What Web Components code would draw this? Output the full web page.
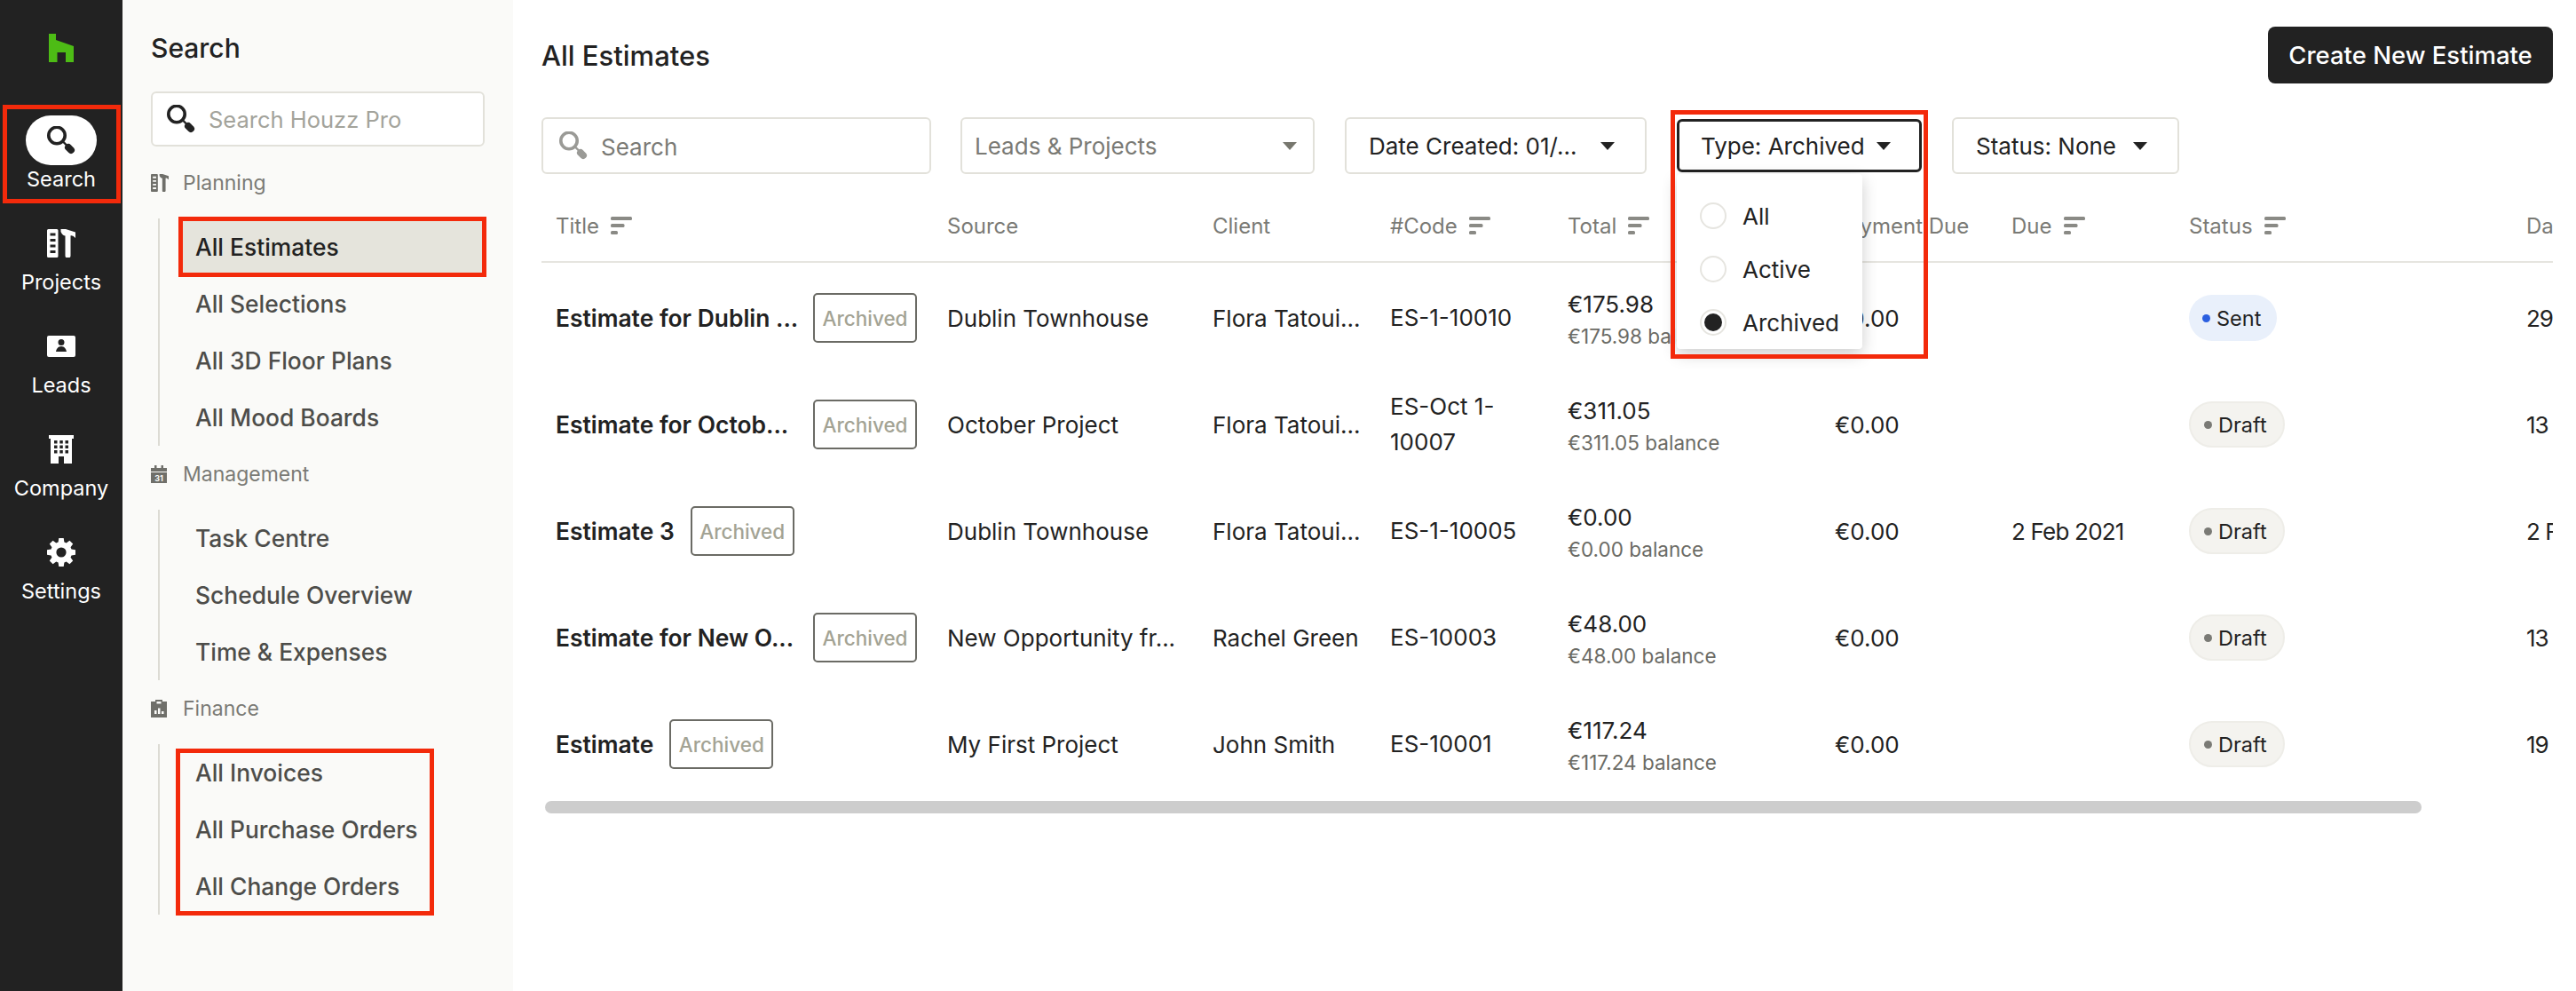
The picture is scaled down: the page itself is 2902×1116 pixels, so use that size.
<!DOCTYPE html>
<html lang="en">
<head>
<meta charset="utf-8">
<title>All Estimates</title>
<style>
  html, body { margin: 0; height: 100%; background: #fff; }
  body {
    font-family: "Inter", "Liberation Sans", sans-serif;
    color: #222;
    overflow: hidden;
  }
  #app { display: flex; height: 1116px; }
</style>
</head>
<body>
<div id="app">
  <hz-rail>
    <hz-rail-item icon="search" active highlight>Search</hz-rail-item>
    <hz-rail-item icon="projects">Projects</hz-rail-item>
    <hz-rail-item icon="leads">Leads</hz-rail-item>
    <hz-rail-item icon="company">Company</hz-rail-item>
    <hz-rail-item icon="settings">Settings</hz-rail-item>
  </hz-rail>

  <hz-side-panel heading="Search" placeholder="Search Houzz Pro">
    <hz-nav-section icon="projects" label="Planning">
      <hz-nav-item active>All Estimates</hz-nav-item>
      <hz-nav-item>All Selections</hz-nav-item>
      <hz-nav-item>All 3D Floor Plans</hz-nav-item>
      <hz-nav-item>All Mood Boards</hz-nav-item>
    </hz-nav-section>
    <hz-nav-section icon="calendar" label="Management">
      <hz-nav-item>Task Centre</hz-nav-item>
      <hz-nav-item>Schedule Overview</hz-nav-item>
      <hz-nav-item>Time &amp; Expenses</hz-nav-item>
    </hz-nav-section>
    <hz-nav-section icon="finance" label="Finance" highlight>
      <hz-nav-item>All Invoices</hz-nav-item>
      <hz-nav-item>All Purchase Orders</hz-nav-item>
      <hz-nav-item>All Change Orders</hz-nav-item>
    </hz-nav-section>
  </hz-side-panel>

  <hz-main heading="All Estimates" action="Create New Estimate">
    <hz-search-filter slot="filters" style="width:439px;margin-right:-1px">Search</hz-search-filter>
    <hz-filter slot="filters" kind="select" style="width:399px">Leads &amp; Projects</hz-filter>
    <hz-filter slot="filters" style="width:340px">Date Created: 01/...</hz-filter>
    <hz-filter slot="filters" open style="width:276px">Type: Archived
      <hz-radio-menu slot="menu">
        <hz-radio-option>All</hz-radio-option>
        <hz-radio-option>Active</hz-radio-option>
        <hz-radio-option checked>Archived</hz-radio-option>
      </hz-radio-menu>
    </hz-filter>
    <hz-filter slot="filters" style="width:256px">Status: None</hz-filter>

    <hz-table>
      <hz-header-row>
        <hz-header-cell sortable>Title</hz-header-cell>
        <hz-header-cell>Source</hz-header-cell>
        <hz-header-cell>Client</hz-header-cell>
        <hz-header-cell sortable>#Code</hz-header-cell>
        <hz-header-cell sortable>Total</hz-header-cell>
        <hz-header-cell>Payment Due</hz-header-cell>
        <hz-header-cell sortable>Due</hz-header-cell>
        <hz-header-cell sortable>Status</hz-header-cell>
        <hz-header-cell>Da</hz-header-cell>
      </hz-header-row>

      <hz-estimate-row truncated name="Estimate for Dublin ..." source="Dublin Townhouse" client="Flora Tatoui..." code="ES-1-10010" total="€175.98" pay="€0.00" status="Sent" date="29"></hz-estimate-row>
      <hz-estimate-row truncated name="Estimate for Octob..." source="October Project" client="Flora Tatoui..." code="ES-Oct 1-10007" total="€311.05" pay="€0.00" status="Draft" date="13"></hz-estimate-row>
      <hz-estimate-row name="Estimate 3" source="Dublin Townhouse" client="Flora Tatoui..." code="ES-1-10005" total="€0.00" pay="€0.00" due="2 Feb 2021" status="Draft" date="2 F"></hz-estimate-row>
      <hz-estimate-row truncated name="Estimate for New O..." source="New Opportunity fr..." client="Rachel Green" code="ES-10003" total="€48.00" pay="€0.00" status="Draft" date="13"></hz-estimate-row>
      <hz-estimate-row name="Estimate" source="My First Project" client="John Smith" code="ES-10001" total="€117.24" pay="€0.00" status="Draft" date="19"></hz-estimate-row>
    </hz-table>
  </hz-main>
</div>

<script>
// Annotation red used by every highlight box in the screenshot
const RED = '#f32a0b';

function gearPath() {
  // 8 teeth gear on a 32 box, centre hole cut by evenodd
  let d = '';
  for (let i = 0; i < 8; i++) {
    const a = (i * Math.PI) / 4;
    const pts = [[-3.4, -11.5], [-2.7, -16], [2.7, -16], [3.4, -11.5]];
    pts.forEach(([x, y], j) => {
      const px = 16 + x * Math.cos(a) - y * Math.sin(a);
      const py = 16 + x * Math.sin(a) + y * Math.cos(a);
      d += (i === 0 && j === 0 ? 'M' : 'L') + px.toFixed(2) + ' ' + py.toFixed(2);
    });
  }
  return d + 'Z M16 10.4a5.6 5.6 0 1 0 0 11.2a5.6 5.6 0 1 0 0-11.2Z';
}

const ICONS = {
  logo: `<path d="M0 0H8V7L28 14V32H19V21H9.5V32H0Z"/>`,
  search: `<circle cx="11" cy="10.5" r="9.2" fill="none" stroke="currentColor" stroke-width="3.6"/>
           <path d="M17.500 17L22 21.500" stroke="currentColor" stroke-width="2.4"/>
           <path d="M24 24L27 27" stroke="currentColor" stroke-width="8" stroke-linecap="round"/>`,
  projects: `<path fill-rule="evenodd" d="M1.5 0H11a1.5 1.5 0 0 1 1.5 1.5V30.500a1.5 1.500 0 0 1-1.500 1.500H1.500A1.500 1.500 0 0 1 0 30.500V1.500A1.500 1.500 0 0 1 1.500 0ZM3.500 4.500V7.500H9.500V4.500ZM3.500 11V14H9.500V11ZM3.500 17.500V20.500H9.500V17.500ZM3.500 24V27H9.500V24Z"/>
             <path d="M15.500 0H21L32 3.500V10C29.500 7.500 27.500 7 26.500 7.500V30a3 2.500 0 0 1-6 0V7.500C18.500 7.500 16.500 5.500 15.500 3Z"/>`,
  leads: `<path fill-rule="evenodd" d="M2 0H30a2 2 0 0 1 2 2V22a2 2 0 0 1-2 2H2a2 2 0 0 1-2-2V2A2 2 0 0 1 2 0ZM16 4a3.500 3.500 0 1 0 0 7a3.500 3.500 0 1 0 0-7ZM16 12C12.500 12 10.500 15 10 18H22C21.500 15 19.500 12 16 12Z"/>`,
  company: `<path fill-rule="evenodd" d="M0 0H28V4H26V32H17V24H11V32H2V4H0ZM6 6V9.500H9.500V6ZM12.300 6V9.500H15.800V6ZM18.500 6V9.500H22V6ZM6 11.500V15H9.500V11.500ZM12.300 11.500V15H15.800V11.500ZM18.500 11.500V15H22V11.500ZM6 17V20.500H9.500V17ZM12.300 17V20.500H15.800V17ZM18.500 17V20.500H22V17Z"/>`,
  settings: `<path fill-rule="evenodd" d="${gearPath()}"/>`,
  calendar: `<path d="M4 0H6.500V3H11.500V0H14V3H18V7H0V3H4Z"/><rect y="8" width="18" height="12"/>
             <text x="9" y="17.500" font-size="9" font-weight="700" text-anchor="middle" fill="#fafaf8" font-family="Inter, sans-serif">31</text>`,
  finance: `<path fill-rule="evenodd" d="M5 0H13V2H18V20H0V2H5ZM6.500 2V4.500H11.500V2ZM4 12V16H6.500V12ZM8 9.500V16H10.500V9.500ZM12 13V16H14.500V13Z"/>`,
  sort: `<rect width="24" height="4" rx="1.500"/><rect y="8" width="15.500" height="4" rx="1.500"/><rect y="16" width="8" height="4" rx="1.500"/>`,
  caret: `<path d="M0 0H16L8 9Z"/>`
};

const ICON_BOX = {
  logo: '0 0 28 32', search: '0 0 32 32', projects: '0 0 32 32', leads: '0 0 32 24',
  company: '0 0 28 32', settings: '0 0 32 32', calendar: '0 0 18 20', finance: '0 0 18 20',
  sort: '0 0 24 20', caret: '0 0 16 9'
};

class HzIcon extends HTMLElement {
  connectedCallback() {
    const name = this.getAttribute('name');
    const w = this.getAttribute('w');
    const h = this.getAttribute('h');
    this.attachShadow({ mode: 'open' }).innerHTML = `
      <style>
        :host { display: inline-flex; flex: none; width: ${w}px; height: ${h}px; color: inherit; }
        svg { display: block; width: 100%; height: 100%; fill: currentColor; }
      </style>
      <svg viewBox="${ICON_BOX[name]}" preserveAspectRatio="none">${ICONS[name]}</svg>`;
  }
}

const RAIL_SIZES = {
  search: [32, 32], projects: [32, 32], leads: [32, 24], company: [28, 32], settings: [32, 32]
};

class HzRail extends HTMLElement {
  constructor() {
    super();
    this.attachShadow({ mode: 'open' }).innerHTML = `
      <style>
        :host {
          display: flex; flex-direction: column; align-items: stretch; flex: none;
          width: 138px; background: #222; box-sizing: border-box; padding-top: 38px;
        }
        .logo { display: flex; justify-content: center; color: #4dbc15; margin-bottom: 60px; }
        .items { display: flex; flex-direction: column; gap: 28px; }
      </style>
      <div class="logo"><hz-icon name="logo" w="28" h="32"></hz-icon></div>
      <div class="items"><slot></slot></div>`;
  }
}

class HzRailItem extends HTMLElement {
  connectedCallback() {
    const icon = this.getAttribute('icon');
    const [w, h] = RAIL_SIZES[icon];
    this.attachShadow({ mode: 'open' }).innerHTML = `
      <style>
        :host { display: flex; flex-direction: column; align-items: center; position: relative; color: #fff; }
        .pill {
          width: 80px; height: 56px; border-radius: 28px;
          display: flex; align-items: center; justify-content: center;
        }
        :host([active]) .pill { background: #fff; color: #222; }
        .label { font-size: 23.500px; line-height: 32px; }
        :host([highlight])::after {
          content: ""; position: absolute; left: 3px; top: -12px; width: 133px; height: 111px;
          box-sizing: border-box; border: 5px solid ${RED};
        }
      </style>
      <div class="pill"><hz-icon name="${icon}" w="${w}" h="${h}"></hz-icon></div>
      <div class="label"><slot></slot></div>`;
  }
}

class HzSidePanel extends HTMLElement {
  connectedCallback() {
    this.attachShadow({ mode: 'open' }).innerHTML = `
      <style>
        :host {
          display: block; flex: none; width: 440px; box-sizing: border-box;
          background: #fafaf8; padding: 34px 32px 0;
        }
        h2 { margin: 0; font-size: 30px; line-height: 40px; font-weight: 500; color: #222; }
        .search {
          margin: 29px 0 25px; width: 376px; height: 62px; box-sizing: border-box;
          border: 2px solid #e2e1da; border-radius: 6px; background: #fff;
          display: flex; align-items: center; gap: 15px; padding-left: 16px;
          font-size: 25.500px; color: #a3a39b;
        }
        .search hz-icon { color: #222; }
      </style>
      <h2>${this.getAttribute('heading')}</h2>
      <div class="search"><hz-icon name="search" w="32" h="32"></hz-icon>${this.getAttribute('placeholder')}</div>
      <slot></slot>`;
  }
}

class HzNavSection extends HTMLElement {
  connectedCallback() {
    const icon = this.getAttribute('icon');
    const size = icon === 'projects' ? [20, 20] : [18, 20];
    this.attachShadow({ mode: 'open' }).innerHTML = `
      <style>
        :host { display: block; margin-bottom: 16px; }
        .head {
          display: flex; align-items: center; height: 32px; margin-bottom: 24px;
          font-size: 23px; color: #7a7a75;
        }
        .icon { width: 36px; display: flex; color: #6f6f6a; }
        .list {
          position: relative; margin-left: 8px; border-left: 2px solid #dcdbd4;
          display: flex; flex-direction: column;
        }
        :host([highlight]) .list::after {
          content: ""; position: absolute; left: 18px; top: 5px; width: 291px; height: 188px;
          box-sizing: border-box; border: 5px solid ${RED}; pointer-events: none;
        }
      </style>
      <div class="head"><span class="icon"><hz-icon name="${icon}" w="${size[0]}" h="${size[1]}"></hz-icon></span>${this.getAttribute('label')}</div>
      <div class="list"><slot></slot></div>`;
  }
}

class HzNavItem extends HTMLElement {
  constructor() {
    super();
    this.attachShadow({ mode: 'open' }).innerHTML = `
      <style>
        :host {
          display: flex; align-items: center; box-sizing: border-box;
          height: 58px; margin: 3px 0 3px 26px; width: 337px; padding-left: 14px;
          font-size: 26.400px; font-weight: 500; color: #4d4d4a;
        }
        :host([active]) { background: #e5e4dc; color: #222; outline: 5px solid ${RED}; }
      </style>
      <slot></slot>`;
  }
}

class HzMain extends HTMLElement {
  connectedCallback() {
    this.attachShadow({ mode: 'open' }).innerHTML = `
      <style>
        :host {
          display: flex; flex-direction: column; flex: 1; min-width: 0;
          box-sizing: border-box; padding: 30px 26px 0 32px; background: #fff;
        }
        header { display: flex; justify-content: space-between; align-items: center; height: 64px; }
        h1 { margin: 0; font-size: 31px; font-weight: 500; color: #222; }
        button {
          width: 321px; height: 64px; border: 0; border-radius: 8px; background: #222; color: #fff;
          font: 500 27.500px "Inter", "Liberation Sans", sans-serif;
        }
        .filters { display: flex; gap: 34px; margin-top: 38px; position: relative; z-index: 2; }
        .body { margin-top: 18px; }
        .scrollbar { margin: 4px 0 0 4px; width: 2114px; height: 14px; border-radius: 7px; background: #cdcdcd; }
      </style>
      <header><h1>${this.getAttribute('heading')}</h1><button>${this.getAttribute('action')}</button></header>
      <div class="filters"><slot name="filters"></slot></div>
      <div class="body"><slot></slot><div class="scrollbar"></div></div>`;
  }
}

class HzSearchFilter extends HTMLElement {
  constructor() {
    super();
    this.attachShadow({ mode: 'open' }).innerHTML = `
      <style>
        :host {
          display: flex; align-items: center; gap: 15px; height: 64px; box-sizing: border-box;
          border: 2px solid #e2e1da; border-radius: 6px; padding-left: 18px;
          font-size: 26px; color: #7a7a75;
        }
        span { padding-top: 3px; }
        hz-icon { color: #9a9a96; }
      </style>
      <hz-icon name="search" w="32" h="32"></hz-icon><span><slot></slot></span>`;
  }
}

class HzFilter extends HTMLElement {
  connectedCallback() {
    const select = this.getAttribute('kind') === 'select';
    this.attachShadow({ mode: 'open' }).innerHTML = `
      <style>
        :host {
          display: flex; position: relative; align-items: center; justify-content: space-between;
          height: 64px; box-sizing: border-box;
          border: 2px solid #e2e1da; border-radius: 6px; background: #fff;
          padding: 0 34px 0 25px; font-size: 26px; color: #222;
        }
        :host([kind="select"]) { color: #7a7a75; padding: 0 18px 0 14px; }
        :host([open]) {
          height: 60px; margin-top: 2px; border: 3px solid #222; padding: 0 32px 0 24px;
        }
        :host([open])::after {
          content: ""; position: absolute; left: -10px; right: -10px; top: -13px; height: 280px;
          box-sizing: border-box; border: 5px solid ${RED}; pointer-events: none; z-index: 3;
        }
        hz-icon { color: ${select ? '#77776e' : '#222'}; }
      </style>
      <span><slot></slot></span>
      <hz-icon name="caret" w="16" h="9"></hz-icon>
      <slot name="menu"></slot>`;
  }
}

class HzRadioMenu extends HTMLElement {
  constructor() {
    super();
    this.attachShadow({ mode: 'open' }).innerHTML = `
      <style>
        :host {
          position: absolute; left: -3px; top: 59px; width: 209px; height: 197px;
          box-sizing: border-box; padding-top: 17px; background: #fff; border-radius: 4px;
          box-shadow: 0 6px 18px rgba(0, 0, 0, .2); z-index: 2;
          display: flex; flex-direction: column;
        }
      </style>
      <slot></slot>`;
  }
}

class HzRadioOption extends HTMLElement {
  constructor() {
    super();
    this.attachShadow({ mode: 'open' }).innerHTML = `
      <style>
        :host {
          display: flex; align-items: center; gap: 18px; height: 60px; padding-left: 26px;
          font-size: 26px; color: #222;
        }
        .dot { width: 30px; height: 30px; box-sizing: border-box; border: 2px solid #e6e5e0; border-radius: 50%; position: relative; }
        :host([checked]) .dot::after {
          content: ""; position: absolute; inset: 3px; border-radius: 50%; background: #222;
        }
      </style>
      <span class="dot"></span><slot></slot>`;
  }
}

// Column tracks of the table, shared with rows through a custom property
class HzTable extends HTMLElement {
  constructor() {
    super();
    this.attachShadow({ mode: 'open' }).innerHTML = `
      <style>
        :host {
          display: block; width: 2266px; overflow: hidden;
          --cols: 441px 299px 200px 200px 301px 199px 200px 380px 46px;
        }
      </style>
      <slot></slot>`;
  }
}

class HzHeaderRow extends HTMLElement {
  constructor() {
    super();
    this.attachShadow({ mode: 'open' }).innerHTML = `
      <style>
        :host {
          display: grid; grid-template-columns: var(--cols); align-items: center;
          height: 80px; border-bottom: 2px solid #e6e5e0; margin-bottom: 2px;
        }
      </style>
      <slot></slot>`;
  }
}

class HzHeaderCell extends HTMLElement {
  connectedCallback() {
    this.attachShadow({ mode: 'open' }).innerHTML = `
      <style>
        :host {
          display: flex; align-items: center; gap: 13px; padding-left: 16px; white-space: nowrap;
          font-size: 24px; color: #7a7a75;
        }
        hz-icon { color: #8a8a85; }
      </style>
      <slot></slot>${this.hasAttribute('sortable') ? '<hz-icon name="sort" w="24" h="20"></hz-icon>' : ''}`;
  }
}

class HzBadge extends HTMLElement {
  constructor() {
    super();
    this.attachShadow({ mode: 'open' }).innerHTML = `
      <style>
        :host {
          display: inline-flex; align-items: center; justify-content: center; flex: none;
          width: 117px; height: 56px; box-sizing: border-box;
          border: 2px solid #6b6b65; border-radius: 5px;
          font-size: 22.500px; font-weight: 500; color: #a3a394;
        }
      </style>
      <slot></slot>`;
  }
}

class HzStatus extends HTMLElement {
  connectedCallback() {
    const sent = this.textContent.trim() === 'Sent';
    this.attachShadow({ mode: 'open' }).innerHTML = `
      <style>
        :host {
          display: inline-flex; align-items: center; gap: 7px; height: 52px; box-sizing: border-box;
          padding: 0 18px 0 15px; border-radius: 26px; font-size: 23.500px; color: #222;
          background: ${sent ? '#e9f0fb' : '#f4f3ef'};
          ${sent ? '' : 'border: 2px solid #eeede8;'}
        }
        i { width: 9px; height: 9px; border-radius: 50%; background: ${sent ? '#2b5fe0' : '#7a7a75'}; }
      </style>
      <i></i><slot></slot>`;
  }
}

class HzEstimateRow extends HTMLElement {
  connectedCallback() {
    const a = (n) => this.getAttribute(n) || '';
    const total = a('total');
    this.attachShadow({ mode: 'open' }).innerHTML = `
      <style>
        :host {
          display: grid; grid-template-columns: var(--cols); align-items: center;
          height: 120px; font-size: 26px; color: #222;
        }
        .cell { padding-left: 16px; white-space: nowrap; }
        .title { display: flex; align-items: center; gap: 18px; }
        .name { font-weight: 600; font-size: 26.400px; }
        :host([truncated]) .name { width: 272px; }
        .code { white-space: normal; line-height: 40px; width: 170px; }
        .money { padding-top: 5px; }
        .total { font-size: 26px; line-height: 36px; }
        .balance { font-size: 22.500px; line-height: 36px; color: #6b6b65; }
        .due { letter-spacing: -.8px; }
        .date { letter-spacing: -1px; }
      </style>
      <div class="cell title"><span class="name">${a('name')}</span><hz-badge>Archived</hz-badge></div>
      <div class="cell">${a('source')}</div>
      <div class="cell">${a('client')}</div>
      <div class="cell code">${a('code')}</div>
      <div class="cell money"><div class="total">${total}</div><div class="balance">${total} balance</div></div>
      <div class="cell">${a('pay')}</div>
      <div class="cell due">${a('due')}</div>
      <div class="cell"><hz-status>${a('status')}</hz-status></div>
      <div class="cell date">${a('date')}</div>`;
  }
}

customElements.define('hz-icon', HzIcon);
customElements.define('hz-rail', HzRail);
customElements.define('hz-rail-item', HzRailItem);
customElements.define('hz-side-panel', HzSidePanel);
customElements.define('hz-nav-section', HzNavSection);
customElements.define('hz-nav-item', HzNavItem);
customElements.define('hz-main', HzMain);
customElements.define('hz-search-filter', HzSearchFilter);
customElements.define('hz-filter', HzFilter);
customElements.define('hz-radio-menu', HzRadioMenu);
customElements.define('hz-radio-option', HzRadioOption);
customElements.define('hz-table', HzTable);
customElements.define('hz-header-row', HzHeaderRow);
customElements.define('hz-header-cell', HzHeaderCell);
customElements.define('hz-badge', HzBadge);
customElements.define('hz-status', HzStatus);
customElements.define('hz-estimate-row', HzEstimateRow);
</script>
</body>
</html>
